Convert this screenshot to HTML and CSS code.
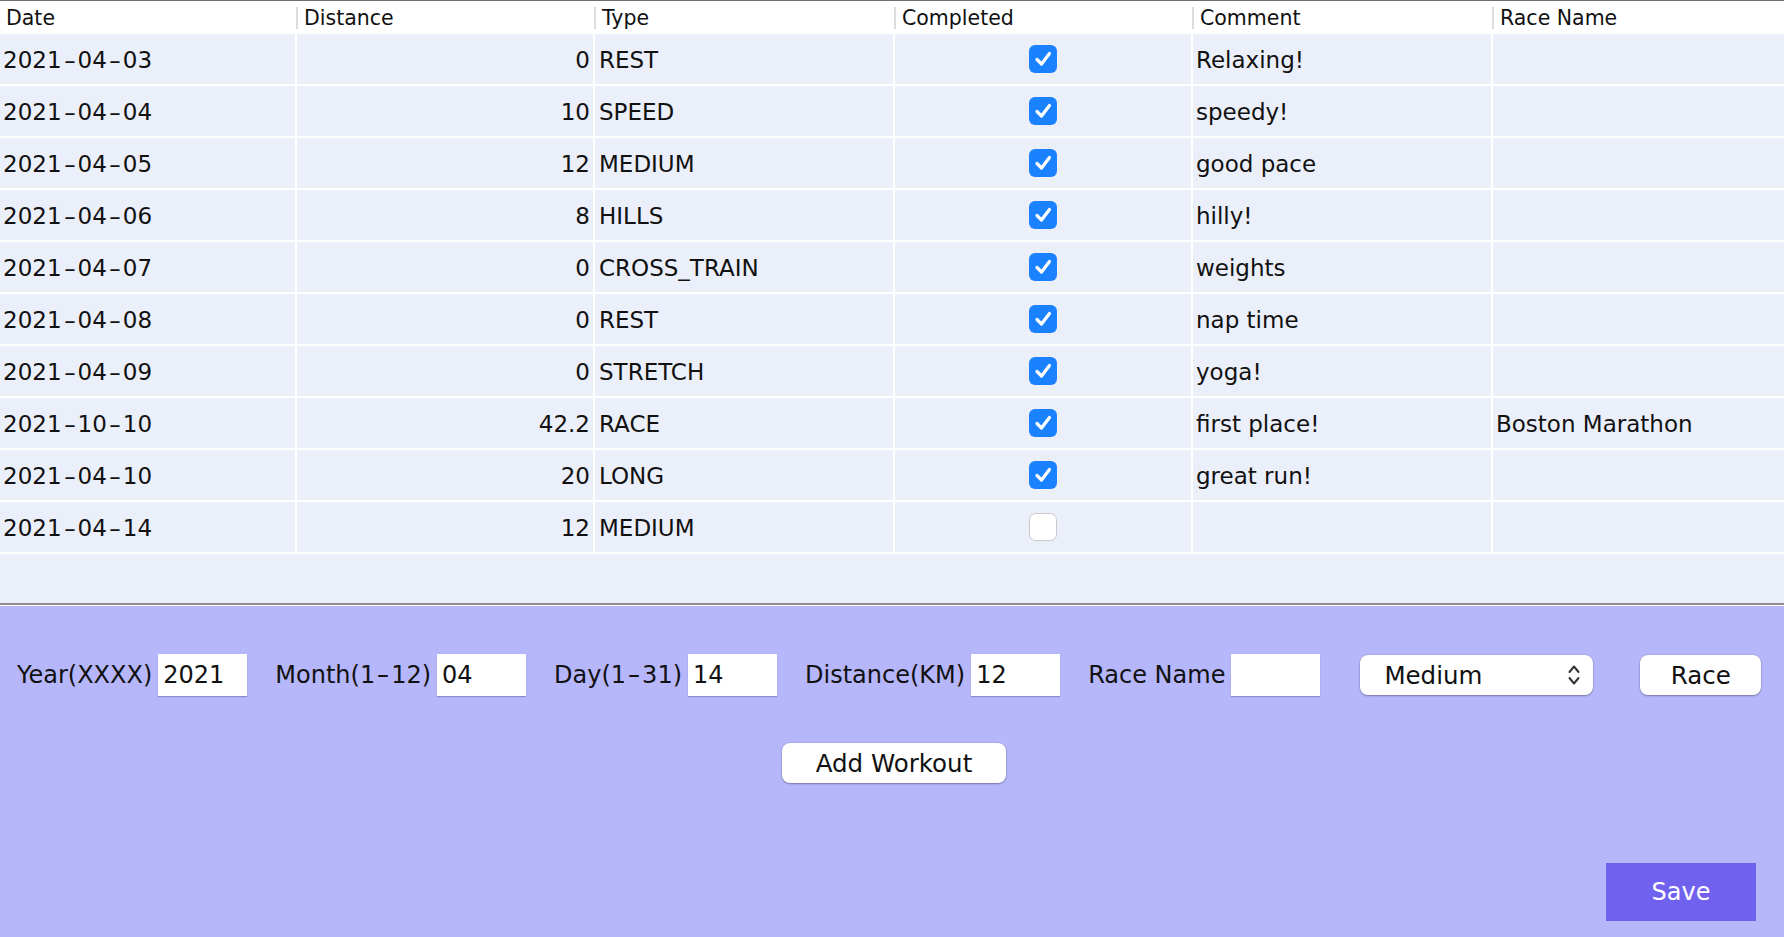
FILE: index.html
```html
<!DOCTYPE html>
<html>
<head>
<meta charset="utf-8">
<link rel="stylesheet" href="styles.css">
</head>
<body>
<div class="app">
  <div class="table-area">
    <div class="thead">
      <div class="th first">Date</div>
      <div class="th">Distance</div>
      <div class="th">Type</div>
      <div class="th">Completed</div>
      <div class="th">Comment</div>
      <div class="th">Race Name</div>
    </div>
    <div class="tr">
      <div class="td">2021<span class="d">-</span>04<span class="d">-</span>03</div><div class="td num">0</div><div class="td type">REST</div>
      <div class="td chk"><svg class="cb" viewBox="0 0 28 28"><rect width="28" height="28" rx="6" class="on"/><path d="M8 14.5 L12.5 19 L20.5 8.5"/></svg></div>
      <div class="td">Relaxing!</div><div class="td"></div>
    </div>
    <div class="tr">
      <div class="td">2021<span class="d">-</span>04<span class="d">-</span>04</div><div class="td num">10</div><div class="td type">SPEED</div>
      <div class="td chk"><svg class="cb" viewBox="0 0 28 28"><rect width="28" height="28" rx="6" class="on"/><path d="M8 14.5 L12.5 19 L20.5 8.5"/></svg></div>
      <div class="td">speedy!</div><div class="td"></div>
    </div>
    <div class="tr">
      <div class="td">2021<span class="d">-</span>04<span class="d">-</span>05</div><div class="td num">12</div><div class="td type">MEDIUM</div>
      <div class="td chk"><svg class="cb" viewBox="0 0 28 28"><rect width="28" height="28" rx="6" class="on"/><path d="M8 14.5 L12.5 19 L20.5 8.5"/></svg></div>
      <div class="td">good pace</div><div class="td"></div>
    </div>
    <div class="tr">
      <div class="td">2021<span class="d">-</span>04<span class="d">-</span>06</div><div class="td num">8</div><div class="td type">HILLS</div>
      <div class="td chk"><svg class="cb" viewBox="0 0 28 28"><rect width="28" height="28" rx="6" class="on"/><path d="M8 14.5 L12.5 19 L20.5 8.5"/></svg></div>
      <div class="td">hilly!</div><div class="td"></div>
    </div>
    <div class="tr">
      <div class="td">2021<span class="d">-</span>04<span class="d">-</span>07</div><div class="td num">0</div><div class="td type">CROSS_TRAIN</div>
      <div class="td chk"><svg class="cb" viewBox="0 0 28 28"><rect width="28" height="28" rx="6" class="on"/><path d="M8 14.5 L12.5 19 L20.5 8.5"/></svg></div>
      <div class="td">weights</div><div class="td"></div>
    </div>
    <div class="tr">
      <div class="td">2021<span class="d">-</span>04<span class="d">-</span>08</div><div class="td num">0</div><div class="td type">REST</div>
      <div class="td chk"><svg class="cb" viewBox="0 0 28 28"><rect width="28" height="28" rx="6" class="on"/><path d="M8 14.5 L12.5 19 L20.5 8.5"/></svg></div>
      <div class="td">nap time</div><div class="td"></div>
    </div>
    <div class="tr">
      <div class="td">2021<span class="d">-</span>04<span class="d">-</span>09</div><div class="td num">0</div><div class="td type">STRETCH</div>
      <div class="td chk"><svg class="cb" viewBox="0 0 28 28"><rect width="28" height="28" rx="6" class="on"/><path d="M8 14.5 L12.5 19 L20.5 8.5"/></svg></div>
      <div class="td">yoga!</div><div class="td"></div>
    </div>
    <div class="tr">
      <div class="td">2021<span class="d">-</span>10<span class="d">-</span>10</div><div class="td num">42.2</div><div class="td type">RACE</div>
      <div class="td chk"><svg class="cb" viewBox="0 0 28 28"><rect width="28" height="28" rx="6" class="on"/><path d="M8 14.5 L12.5 19 L20.5 8.5"/></svg></div>
      <div class="td">first place!</div><div class="td">Boston Marathon</div>
    </div>
    <div class="tr">
      <div class="td">2021<span class="d">-</span>04<span class="d">-</span>10</div><div class="td num">20</div><div class="td type">LONG</div>
      <div class="td chk"><svg class="cb" viewBox="0 0 28 28"><rect width="28" height="28" rx="6" class="on"/><path d="M8 14.5 L12.5 19 L20.5 8.5"/></svg></div>
      <div class="td">great run!</div><div class="td"></div>
    </div>
    <div class="tr">
      <div class="td">2021<span class="d">-</span>04<span class="d">-</span>14</div><div class="td num">12</div><div class="td type">MEDIUM</div>
      <div class="td chk"><svg class="cb" viewBox="0 0 28 28"><rect x="0.5" y="0.5" width="27" height="27" rx="6" class="off"/></svg></div>
      <div class="td"></div><div class="td"></div>
    </div>
  </div>
  <div class="divider"></div>
  <div class="panel">
    <div class="fields">
      <div class="group"><span class="label">Year(XXXX)</span><input class="field" type="text" value="2021"></div>
      <div class="group"><span class="label">Month(1<span class="d">-</span>12)</span><input class="field" type="text" value="04"></div>
      <div class="group"><span class="label">Day(1<span class="d">-</span>31)</span><input class="field" type="text" value="14"></div>
      <div class="group"><span class="label">Distance(KM)</span><input class="field" type="text" value="12"></div>
      <div class="group"><span class="label">Race Name</span><input class="field" type="text" value=""></div>
      <div class="select"><span>Medium</span><svg class="chev" viewBox="0 0 14 26"><path d="M2.5 10 L7 4.5 L11.5 10 M2.5 16 L7 21.5 L11.5 16"/></svg></div>
      <button class="btn race">Race</button>
    </div>
    <div class="add-row"><button class="btn add">Add Workout</button></div>
    <div class="save-row"><button class="save">Save</button></div>
  </div>
</div>
</body>
</html>
```

FILE: styles.css
```css
* { box-sizing: border-box; }
html, body { margin: 0; padding: 0; }
body {
  width: 1784px;
  height: 937px;
  overflow: hidden;
  font-family: "DejaVu Sans", "Liberation Sans", sans-serif;
  color: #111;
}
.app {
  display: flex;
  flex-direction: column;
  height: 937px;
}
.table-area {
  height: 603px;
  background: #ebeffa;
  overflow: hidden;
  flex: none;
}
.thead {
  display: grid;
  grid-template-columns: 296px 298px 300px 298px 300px 300px;
  width: 1792px;
  height: 34px;
  border-top: 1px solid #6e6e6e;
  background: #fff;
}
.th {
  display: flex;
  align-items: center;
  font-size: 20.5px;
  color: #111;
  white-space: nowrap;
}
.th::before {
  content: "";
  width: 2px;
  height: 22px;
  background: #dcdcdc;
  margin-right: 6px;
}
.th.first { padding-left: 6px; }
.th.first::before { display: none; }
.tr {
  display: grid;
  grid-template-columns: 295px 296px 298px 296px 298px 298px;
  column-gap: 2px;
  width: 1793px;
  background: #fff;
  padding-bottom: 2px;
}
.td {
  height: 50px;
  background: #ebeffa;
  display: flex;
  align-items: center;
  padding: 2px 3px 0;
  font-size: 23px;
  white-space: nowrap;
  color: #111;
}
.td.num { justify-content: flex-end; }
.td.type { padding-left: 4px; }
.td.chk { justify-content: center; padding: 0; }
.d {
  display: inline-block;
  width: 16px;
  text-align: center;
  transform: scaleX(1.5);
}
.cb { width: 28px; height: 28px; }
.cb .on { fill: #1a82ff; }
.cb .off { fill: #fff; stroke: #c9c9c9; stroke-width: 1; }
.cb path {
  fill: none;
  stroke: #fff;
  stroke-width: 3.2;
  stroke-linecap: round;
  stroke-linejoin: round;
}
.divider {
  height: 3px;
  border-top: 2px solid #8d8d8d;
  background: #fff;
  flex: none;
}
.panel {
  flex: 1;
  background: #b6b6fb;
  display: flex;
  flex-direction: column;
  padding-top: 47px;
}
.fields {
  display: flex;
  align-items: center;
  gap: 28px;
  padding-left: 17px;
  height: 44px;
}
.group {
  display: flex;
  align-items: center;
  gap: 6px;
}
.label {
  font-size: 24px;
  color: #111;
  white-space: nowrap;
}
.field {
  width: 89px;
  height: 42px;
  border: 0;
  outline: 0;
  padding: 0 5px;
  margin: 0;
  font-family: "DejaVu Sans", sans-serif;
  font-size: 24px;
  color: #111;
  background: #fff;
  box-shadow: 0 1px 1px rgba(60, 60, 110, 0.35);
}
.select {
  margin-left: 12px;
  width: 233px;
  height: 40px;
  background: #fff;
  border-radius: 8px;
  box-shadow: 0 0 0 0.5px rgba(0,0,0,0.12), 0 1px 2px rgba(0,0,0,0.3);
  display: flex;
  align-items: center;
  justify-content: space-between;
  padding: 0 12px 0 24px;
  font-size: 24.5px;
  color: #111;
}
.chev { width: 14px; height: 26px; }
.chev path {
  fill: none;
  stroke: #333;
  stroke-width: 2;
  stroke-linecap: round;
  stroke-linejoin: round;
}
.btn {
  height: 40px;
  background: #fff;
  border: 0;
  border-radius: 8px;
  box-shadow: 0 0 0 0.5px rgba(0,0,0,0.12), 0 1px 2px rgba(0,0,0,0.3);
  font-family: "DejaVu Sans", sans-serif;
  font-size: 24.5px;
  color: #111;
  padding: 0;
}
.race { width: 121px; margin-left: 19px; }
.add-row {
  display: flex;
  justify-content: center;
  margin-top: 46px;
  padding-left: 4px;
}
.add { width: 224px; }
.save-row {
  display: flex;
  justify-content: flex-end;
  padding-right: 28px;
  margin-top: 80px;
}
.save {
  width: 150px;
  height: 58px;
  border: 0;
  background: #7161ef;
  color: #fff;
  font-family: "DejaVu Sans", sans-serif;
  font-size: 24px;
  padding: 0;
}
```
